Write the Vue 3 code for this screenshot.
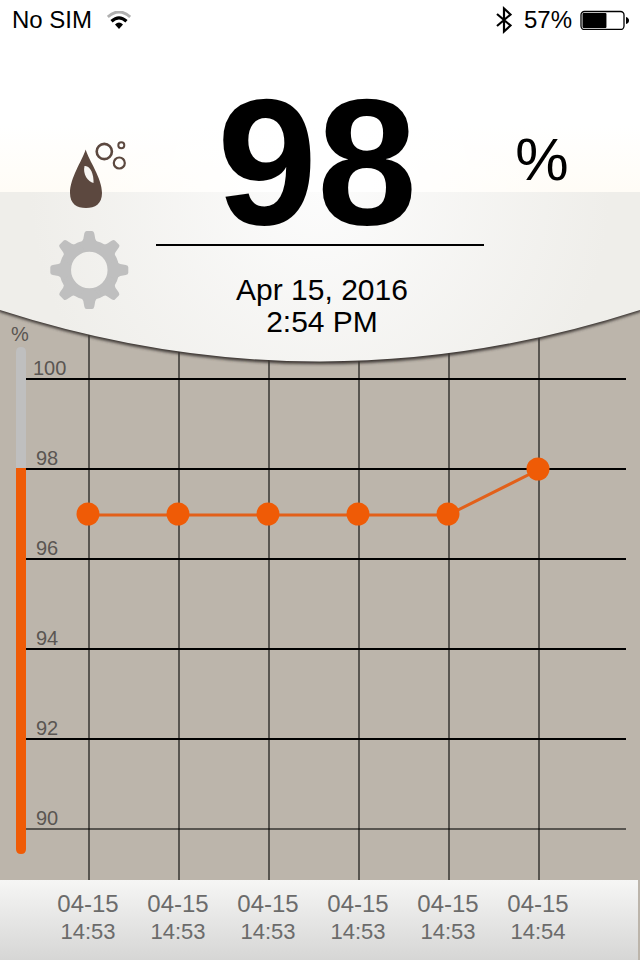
<!-- src/App.vue -->
<script setup>
import { computed } from "vue";

const battery = 57;

const readings = [
  { value: 97, date: "04-15", time: "14:53" },
  { value: 97, date: "04-15", time: "14:53" },
  { value: 97, date: "04-15", time: "14:53" },
  { value: 97, date: "04-15", time: "14:53" },
  { value: 97, date: "04-15", time: "14:53" },
  { value: 98, date: "04-15", time: "14:54" },
];

const ticks = [100, 98, 96, 94, 92, 90];
const teeth = [0, 45, 90, 135, 180, 225, 270, 315];

const latest = computed(() => readings[readings.length - 1].value);

// Chart units: 45 per percent, 90 per reading
const yFor = (value) => 69 + (100 - value) * 45;

const points = computed(() =>
  readings.map((r, i) => ({ x: 88 + i * 90, y: yFor(r.value) }))
);
const linePoints = computed(() =>
  points.value.map((p) => `${p.x},${p.y + 1}`).join(" ")
);
</script>

<template>
  <main class="screen">
    <header class="header">
      <svg class="header-shape" viewBox="0 0 640 376" preserveAspectRatio="none" aria-hidden="true">
        <defs>
          <linearGradient id="top" x1="0" y1="0" x2="0" y2="1">
            <stop offset="0.65" stop-color="#ffffff" />
            <stop offset="1" stop-color="#fffcf6" />
          </linearGradient>
          <radialGradient id="glow" gradientUnits="userSpaceOnUse" cx="320" cy="190" r="290">
            <stop offset="0" stop-color="#fcfcfc" />
            <stop offset="1" stop-color="#efeeea" />
          </radialGradient>
          <radialGradient id="shine" gradientUnits="userSpaceOnUse" cx="320" cy="190" r="250">
            <stop offset="0.2" stop-color="#ffffff" />
            <stop offset="1" stop-color="#ffffff" stop-opacity="0" />
          </radialGradient>
          <filter id="soft" x="-5%" y="-5%" width="110%" height="110%">
            <feGaussianBlur stdDeviation="1.6" />
          </filter>
        </defs>
        <path d="M-10 300 L0 311 Q320 415 640 311 L650 300Z" fill="#3a3632" filter="url(#soft)" transform="translate(0 1)" />
        <path d="M0 190 V310 Q320 413 640 310 V190Z" fill="url(#glow)" />
        <rect width="640" height="192" fill="url(#top)" />
        <rect width="640" height="192" fill="url(#shine)" />
      </svg>

      <div class="status">
        <span>No SIM</span>
        <svg class="wifi" width="24" height="18" viewBox="0 0 24 18" aria-hidden="true">
          <path d="M0.800 6 Q12 -4 23.200 6" fill="none" stroke="#b0b0b0" stroke-width="3" />
          <path d="M4.500 10.300 Q12 3.500 19.500 10.300" fill="none" stroke="#000" stroke-width="3.200" />
          <path d="M8 13.500 Q12 9.500 16 13.500 L12 18Z" />
        </svg>
        <svg class="bluetooth" width="16" height="28" viewBox="0 0 16 28" aria-hidden="true">
          <path d="M1 8 L14.500 19.500 L8 25.500 V2.500 L14.500 8.500 L1 20" fill="none" stroke="#000" stroke-width="2.200" />
        </svg>
        <span>{{ battery }}%</span>
        <svg class="battery" width="50" height="20" viewBox="0 0 50 20" aria-hidden="true">
          <rect x="1" y="1.500" width="43" height="18" rx="3.500" fill="none" stroke="#000" stroke-width="1.300" />
          <rect x="2.500" y="3" :width="battery * 0.42" height="15" rx="1" />
          <path d="M46 7 Q49 8 49 10.500 Q49 13 46 14Z" />
        </svg>
      </div>

      <div class="summary">
        <div class="icons">
          <svg width="80" height="72" viewBox="0 0 80 72" role="img" aria-label="Humidity">
            <path d="M36.700 9.500 C40 21 53 38 53 53 C53 64 46 68 37 68 C28 68 21 64 21 53 C21 38 33 21 36.700 9.500Z" fill="#5c483f" />
            <path d="M35.500 26 C41 25 45 34 44.500 43 C39 42 33.500 34 35.500 26Z" fill="#f7f5f2" />
            <g fill="none" stroke="#5c483f">
              <circle cx="55.300" cy="11.500" r="7.600" stroke-width="2.600" />
              <circle cx="70.300" cy="23" r="5.500" stroke-width="2.200" />
              <circle cx="72.300" cy="5.300" r="3" stroke-width="2" />
            </g>
          </svg>
          <button class="settings" type="button" aria-label="Settings">
            <svg width="80" height="80" viewBox="0 0 80 80" aria-hidden="true">
              <circle cx="40.300" cy="40" r="24" fill="none" stroke="#bfbfbf" stroke-width="11.500" />
              <path
                v-for="angle in teeth"
                :key="angle"
                d="M30 13.500 Q33.500 12 34.300 9 L35.300 3.500 Q35.800 1 37.500 1 H43.100 Q44.800 1 45.300 3.500 L46.300 9 Q47.100 12 50.600 13.500 L46 20 H35Z"
                fill="#bfbfbf"
                :transform="`rotate(${angle} 40.3 40)`"
              />
            </svg>
          </button>
        </div>
        <div class="reading">
          <div class="value">{{ latest }}</div>
          <div class="taken">Apr 15, 2016<br />2:54 PM</div>
        </div>
        <div class="unit">%</div>
      </div>
    </header>

    <svg class="chart" viewBox="0 0 640 570" role="img" aria-label="Recent readings">
      <path d="M89 0V570M179 0V570M269 0V570M359 0V570M449 0V570M539 0V570" stroke="#000" stroke-opacity="0.53" stroke-width="2" />
      <line
        v-for="tick in ticks"
        :key="tick"
        x1="26"
        x2="626"
        :y1="yFor(tick)"
        :y2="yFor(tick)"
        stroke="#000"
        stroke-width="2"
        :stroke-opacity="tick === 90 ? 0.53 : 1"
      />
      <path d="M16 158 V42 Q16 37 21 37 Q26 37 26 42 V158Z" fill="#bfbfbf" />
      <path d="M16 158 V539 Q16 544 21 544 Q26 544 26 539 V158Z" fill="#ef5b06" />
      <g class="tick-labels">
        <text x="11" y="31">%</text>
        <text v-for="tick in ticks" :key="tick" :x="tick === 100 ? 33 : 36" :y="yFor(tick) - 4">{{ tick }}</text>
      </g>
      <polyline :points="linePoints" fill="none" stroke="#e2601a" stroke-width="3" />
      <circle v-for="p in points" :key="p.x" :cx="p.x" :cy="p.y" r="11.500" fill="#ef5b06" />
    </svg>

    <footer class="dates">
      <div v-for="(r, i) in readings" :key="i" class="date">
        <span>{{ r.date }}</span>
        <span class="time">{{ r.time }}</span>
      </div>
    </footer>
  </main>
</template>

<style>
body {
  margin: 0;
  background: #bcb5ab;
}
</style>

<style scoped>
.screen {
  display: flex;
  flex-direction: column;
  min-height: 100vh;
  font-family: "Liberation Sans", Arial, sans-serif;
  color: #000;
}
.header {
  position: relative;
  z-index: 1;
  padding-bottom: 38px;
}
.header-shape {
  position: absolute;
  inset: 0;
  z-index: -1;
  width: 100%;
  height: 100%;
}
.status {
  display: flex;
  align-items: center;
  height: 40px;
  padding: 0 10px 0 12px;
  font-size: 24px;
}
.wifi {
  margin-left: 15px;
}
.bluetooth {
  margin: 0 12px 0 auto;
}
.battery {
  margin-left: 8px;
}
.summary {
  display: grid;
  grid-template-columns: 156fr 328fr 156fr;
  margin-top: 40px;
}
.icons {
  display: flex;
  flex-direction: column;
  align-items: center;
  gap: 18px;
  padding: 60px 0 0 22px;
}
.settings {
  display: flex;
  padding: 0;
  border: 0;
  background: none;
  cursor: pointer;
}
.reading {
  text-align: center;
}
.value {
  padding-right: 6px;
  border-bottom: 2px solid #000;
  font-size: 180px;
  font-weight: bold;
  line-height: 164px;
}
.taken {
  margin-top: 28px;
  padding-left: 4px;
  font-size: 30px;
  line-height: 32px;
}
.unit {
  padding: 48px 40px 0 0;
  font-size: 60px;
  line-height: 64px;
  text-align: center;
}
.chart {
  display: block;
  width: 100%;
  margin-top: -66px;
}
.tick-labels {
  font-size: 20px;
  fill: #5a5652;
}
.dates {
  display: grid;
  flex: 1;
  grid-template-columns: 43fr repeat(6, 90fr) 55fr;
  align-content: start;
  margin-right: 2px;
  padding: 10px 0 14px;
  background: linear-gradient(#f6f6f5, #d6d6d5);
  color: #6b6b6b;
  font-size: 24px;
  line-height: 28px;
}
.dates::before {
  content: "";
}
.date {
  display: flex;
  flex-direction: column;
  align-items: center;
}
.time {
  font-size: 22px;
}
</style>
